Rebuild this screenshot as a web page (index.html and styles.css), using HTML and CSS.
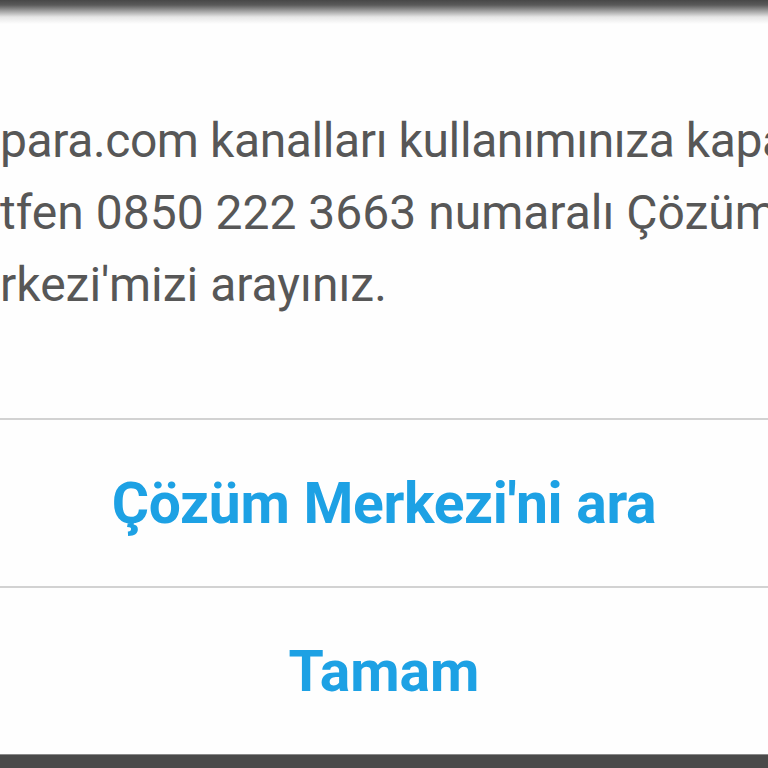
FILE: index.html
```html
<!DOCTYPE html>
<html lang="tr">
<head>
<meta charset="utf-8">
<link rel="stylesheet" href="styles.css">
</head>
<body>
<div class="screen">
  <div class="top-shade"></div>
  <div class="dialog">
    <div class="message">
      <div class="line line1">para.com kanalları kullanımınıza kapatılmıştır.</div>
      <div class="line line2">tfen 0850 222 3663 numaralı Çözüm</div>
      <div class="line line3">rkezi'mizi arayınız.</div>
    </div>
    <div class="divider"></div>
    <div class="button btn-call">Çözüm Merkezi'ni ara</div>
    <div class="divider"></div>
    <div class="button btn-ok">Tamam</div>
  </div>
  <div class="bottom-bar"></div>
</div>
</body>
</html>
```
FILE: styles.css
```css
html, body {
  margin: 0;
  padding: 0;
  width: 768px;
  height: 768px;
  overflow: hidden;
  background: #fefefe;
}
.screen {
  width: 768px;
  height: 768px;
  display: flex;
  flex-direction: column;
  overflow: hidden;
}
.top-shade {
  height: 24px;
  flex: none;
  background: linear-gradient(to bottom, #474747 0px, #5a5a5a 5px, #a0a0a0 11px, #e6e6e6 17px, #fefefe 24px);
}
.dialog {
  flex: 1;
  display: flex;
  flex-direction: column;
  background: #fefefe;
}
.message {
  padding-top: 81px;
  padding-bottom: 97px;
  font-family: Roboto, "Noto Sans", sans-serif;
  font-size: 48px;
  line-height: 72px;
  color: #575757;
  overflow: hidden;
}
.line {
  white-space: nowrap;
}
.line1 {
  letter-spacing: -0.4px;
}
.divider {
  height: 2px;
  background: #d2d2d2;
  flex: none;
}
.button {
  flex: 1;
  display: flex;
  align-items: center;
  justify-content: center;
  font-family: Roboto, "Noto Sans", sans-serif;
  font-weight: 700;
  font-size: 57px;
  color: #1da1e4;
}
.btn-call {
  letter-spacing: -0.3px;
}
.bottom-bar {
  height: 13px;
  flex: none;
  background: #4a4a4a;
  border-top: 1px solid #8a8a8a;
}
```
